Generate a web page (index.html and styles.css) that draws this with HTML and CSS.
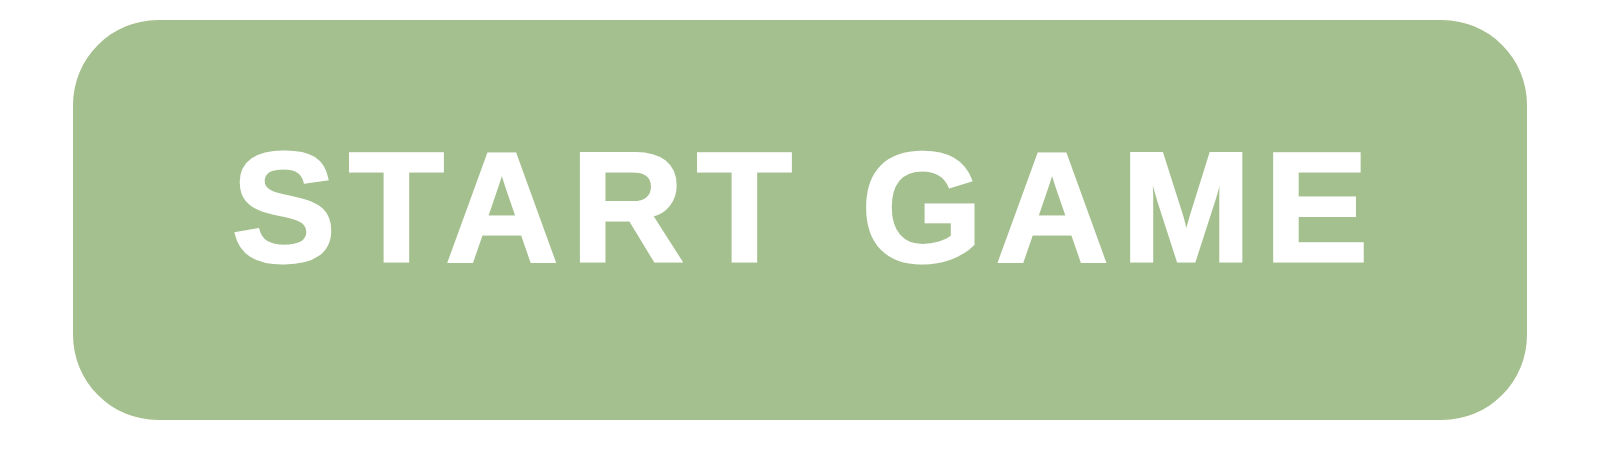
FILE: index.html
```html
<!DOCTYPE html>
<html lang="en">
<head>
<meta charset="utf-8">
<title>Start Game</title>
<link rel="stylesheet" href="styles.css">
</head>
<body>
<main class="stage">
  <button class="start-button" type="button"><span class="start-label">START GAME</span></button>
</main>
</body>
</html>
```
FILE: styles.css
```css
html, body {
  margin: 0;
  padding: 0;
  background: #ffffff;
}

.stage {
  width: 1600px;
  height: 450px;
  box-sizing: border-box;
  padding: 20px 73px 30px;
  display: flex;
}

.start-button {
  flex: 1;
  height: 400px;
  border: none;
  border-radius: 85px;
  background: #a5c08f;
  padding: 0 0 26px 13px;
  margin: 0;
  display: flex;
  align-items: center;
  justify-content: center;
  cursor: pointer;
}

.start-label {
  color: #ffffff;
  font-family: "Liberation Sans", Arial, sans-serif;
  font-weight: 700;
  font-size: 156px;
  line-height: 1;
  letter-spacing: 13px;
  -webkit-text-stroke: 3px #ffffff;
}
```
